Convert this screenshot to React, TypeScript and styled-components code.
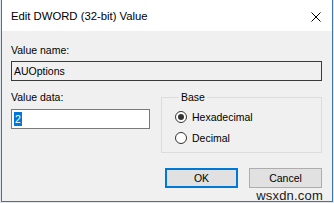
import React from "react";
import styled, { createGlobalStyle } from "styled-components";

const GlobalStyle = createGlobalStyle`
  html, body {
    margin: 0;
    padding: 0;
    background: #dfe6ee;
    font-family: "Liberation Sans", Arial, sans-serif;
  }
`;

const Window = styled.div`
  position: relative;
  box-sizing: border-box;
  width: 332px;
  height: 202px;
  margin-left: 1px;
  border: 1px solid #3d73b9;
  border-top: none;
  background: #f0f0f0;
  display: flex;
  flex-direction: column;
  color: #000;
`;

const TitleBar = styled.div`
  height: 31px;
  background: #ffffff;
  display: flex;
  align-items: center;
  justify-content: space-between;
  padding: 0 10px 0 9px;
  font-size: 11.3px;
`;

const CloseButton = styled.div`
  width: 12px;
  height: 12px;
  display: flex;
  align-items: center;
  justify-content: center;
  margin-top: 3px;
`;

const Body = styled.div`
  flex: 1;
  padding: 12px 10px 0 9px;
  font-size: 10.5px;
`;

const Label = styled.div`
  height: 14px;
  line-height: 14px;
`;

const NameBox = styled.div`
  box-sizing: border-box;
  height: 20px;
  margin-top: 4px;
  border: 1px solid #3a3a3a;
  background: #f0f0f0;
  padding: 0 2px;
  display: flex;
  align-items: center;
`;

const Lower = styled.div`
  display: grid;
  grid-template-columns: 139px 161px;
  column-gap: 11px;
  margin-top: 9px;
`;

const DataColumn = styled.div`
  display: flex;
  flex-direction: column;
`;

const DataBox = styled.div`
  box-sizing: border-box;
  height: 20px;
  margin-top: 5px;
  border: 1px solid #7a7a7a;
  background: #ffffff;
  padding: 0 2px;
  display: flex;
  align-items: center;
`;

const Selected = styled.span`
  background: #0078d7;
  color: #ffffff;
  line-height: 14px;
  padding: 0 1px;
`;

const GroupBox = styled.fieldset`
  box-sizing: border-box;
  height: 63px;
  margin: 0;
  padding: 2px 0 0 13px;
  border: 1px solid #dcdcdc;
  min-width: 0;
`;

const Legend = styled.legend`
  padding: 0 2px;
  margin-left: 4px;
  line-height: 14px;
`;

const RadioRow = styled.label`
  display: flex;
  align-items: center;
  gap: 5px;
  height: 21px;
`;

const RadioCircle = styled.span<{ checked?: boolean }>`
  box-sizing: border-box;
  width: 12px;
  height: 12px;
  border-radius: 50%;
  border: 1px solid #333333;
  background: #ffffff;
  display: flex;
  align-items: center;
  justify-content: center;

  &::after {
    content: "";
    width: 6px;
    height: 6px;
    border-radius: 50%;
    background: ${(p) => (p.checked ? "#333333" : "transparent")};
  }
`;

const ButtonRow = styled.div`
  display: flex;
  justify-content: flex-end;
  gap: 11px;
  margin-top: 15px;
`;

const Button = styled.button<{ primary?: boolean }>`
  box-sizing: border-box;
  width: 73px;
  height: 20px;
  padding: 0;
  font-family: inherit;
  font-size: 10.5px;
  color: #000;
  background: #e1e1e1;
  border: ${(p) => (p.primary ? "2px solid #0078d7" : "1px solid #adadad")};
`;

const Watermark = styled.div`
  position: absolute;
  right: 9px;
  bottom: -1px;
  font-size: 13px;
  line-height: 13px;
  color: #1a1a1a;
  letter-spacing: 0.2px;
`;

const App: React.FC = () => {
  return (
    <>
      <GlobalStyle />
      <Window>
        <TitleBar>
          <span>Edit DWORD (32-bit) Value</span>
          <CloseButton>
            <svg width="10" height="10" viewBox="0 0 10 10">
              <path d="M0.5 0.5 L9.5 9.5 M9.5 0.5 L0.5 9.5" stroke="#000" strokeWidth="1" />
            </svg>
          </CloseButton>
        </TitleBar>
        <Body>
          <Label>Value name:</Label>
          <NameBox>AUOptions</NameBox>
          <Lower>
            <DataColumn>
              <Label>Value data:</Label>
              <DataBox>
                <Selected>2</Selected>
              </DataBox>
            </DataColumn>
            <GroupBox>
              <Legend>Base</Legend>
              <RadioRow>
                <RadioCircle checked />
                Hexadecimal
              </RadioRow>
              <RadioRow>
                <RadioCircle />
                Decimal
              </RadioRow>
            </GroupBox>
          </Lower>
          <ButtonRow>
            <Button primary>OK</Button>
            <Button>Cancel</Button>
          </ButtonRow>
        </Body>
        <Watermark>wsxdn.com</Watermark>
      </Window>
    </>
  );
};

export default App;
